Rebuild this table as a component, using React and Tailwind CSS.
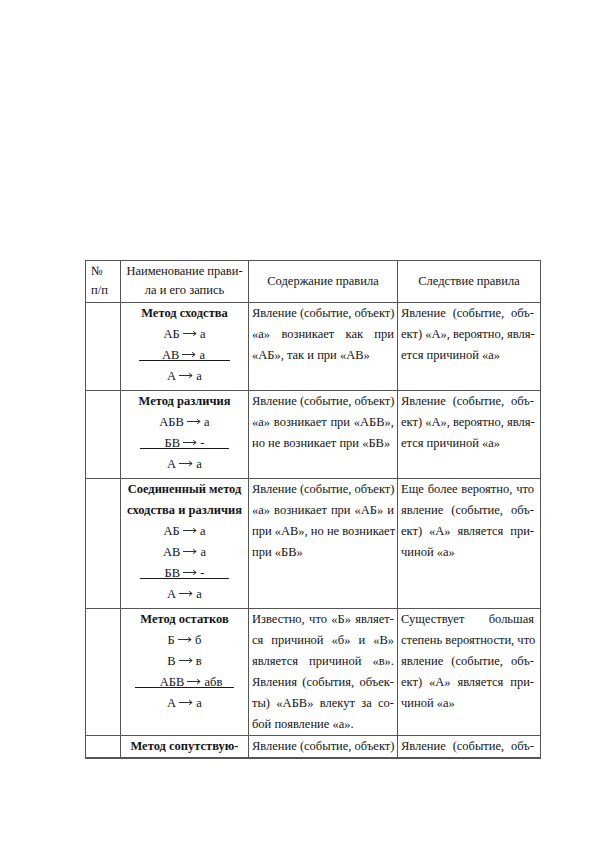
import React from "react";

const Arrow = () => (
  <svg
    viewBox="0 0 14 8"
    className="inline-block w-[14px] h-[8px] align-[1px]"
    fill="none"
    stroke="#1a1a1a"
    strokeWidth="0.9"
  >
    <path d="M0 4.5H12.8" />
    <path d="M10 2.3L13.2 4.5L10 6.7" />
  </svg>
);

const R = ({ a, b }) => (
  <>
    {a} <Arrow /> {b}
  </>
);

const J = ({ children }) => (
  <div className="text-justify [text-align-last:justify] whitespace-nowrap">{children}</div>
);
const L = ({ children }) => <div className="text-left whitespace-nowrap">{children}</div>;
const C = ({ children, b }) => (
  <div className={"text-center whitespace-nowrap" + (b ? " font-bold" : "")}>{children}</div>
);
const U = ({ a, b, cls }) => (
  <div className="text-center whitespace-nowrap">
    <span className={"inline-block border-b border-[#1a1a1a] leading-[10px] " + cls}>
      <R a={a} b={b} />
    </span>
  </div>
);

const td1 = "border border-[#555] p-0 align-top";
const td2 = "border border-[#555] px-[2px] pt-0 align-top";
const td3 = "border border-[#555] pl-[3px] pr-[3px] pt-0 align-top";
const td4 = "border border-[#555] pl-[3px] pr-[6px] pt-0 align-top";

export default function App() {
  return (
    <div className="w-[596px] h-[842px] bg-white pt-[260px] pl-[85px] text-[#141414] font-['Liberation_Serif','Times_New_Roman',serif] text-[12.5px] leading-[21px]">
      <table className="table-fixed border-collapse w-[455px] border-b-2 border-b-[#555]">
        <colgroup>
          <col className="w-[35px]" />
          <col className="w-[128px]" />
          <col className="w-[149px]" />
          <col className="w-[143px]" />
        </colgroup>
        <tbody>
          <tr className="h-[42px]">
            <td className="border border-[#555] pl-[5px] pt-[1px] align-top leading-[19px]">
              <div>№</div>
              <div>п/п</div>
            </td>
            <td className="border border-[#555] pt-[1px] align-top text-center leading-[19px]">
              <div>Наименование прави-</div>
              <div>ла и его запись</div>
            </td>
            <td className="border border-[#555] text-center align-middle">Содержание правила</td>
            <td className="border border-[#555] text-center align-middle">Следствие правила</td>
          </tr>
          <tr className="h-[88px]">
            <td className={td1}></td>
            <td className={td2}>
              <C b>Метод сходства</C>
              <C><R a="АБ" b="а" /></C>
              <U a="АВ" b="а" cls="pl-[23px] pr-[25px]" />
              <C><R a="А" b="а" /></C>
            </td>
            <td className={td3}>
              <J>Явление (событие, объект)</J>
              <J>«а» возникает как при</J>
              <L>«АБ», так и при «АВ»</L>
            </td>
            <td className={td4}>
              <J>Явление (событие, объ-</J>
              <J>ект) «А», вероятно, явля-</J>
              <L>ется причиной «а»</L>
            </td>
          </tr>
          <tr className="h-[88px]">
            <td className={td1}></td>
            <td className={td2}>
              <C b>Метод различия</C>
              <C><R a="АБВ" b="а" /></C>
              <U a="БВ" b="-" cls="pl-[25px] pr-[25px]" />
              <C><R a="А" b="а" /></C>
            </td>
            <td className={td3}>
              <J>Явление (событие, объект)</J>
              <J>«а» возникает при «АБВ»,</J>
              <L>но не возникает при «БВ»</L>
            </td>
            <td className={td4}>
              <J>Явление (событие, объ-</J>
              <J>ект) «А», вероятно, явля-</J>
              <L>ется причиной «а»</L>
            </td>
          </tr>
          <tr className="h-[130px]">
            <td className={td1}></td>
            <td className={td2}>
              <C b>Соединенный метод</C>
              <C b>сходства и различия</C>
              <C><R a="АБ" b="а" /></C>
              <C><R a="АВ" b="а" /></C>
              <U a="БВ" b="-" cls="pl-[25px] pr-[25px]" />
              <C><R a="А" b="а" /></C>
            </td>
            <td className={td3}>
              <J>Явление (событие, объект)</J>
              <J>«а» возникает при «АБ» и</J>
              <J>при «АВ», но не возникает</J>
              <L>при «БВ»</L>
            </td>
            <td className={td4}>
              <J>Еще более вероятно, что</J>
              <J>явление (событие, объ-</J>
              <J>ект) «А» является при-</J>
              <L>чиной «а»</L>
            </td>
          </tr>
          <tr className="h-[125px]">
            <td className={td1}></td>
            <td className={td2}>
              <C b>Метод остатков</C>
              <C><R a="Б" b="б" /></C>
              <C><R a="В" b="в" /></C>
              <U a="АБВ" b="абв" cls="pl-[25px] pr-[12px]" />
              <C><R a="А" b="а" /></C>
            </td>
            <td className={td3}>
              <J>Известно, что «Б» являет-</J>
              <J>ся причиной «б» и «В»</J>
              <J>является причиной «в».</J>
              <J>Явления (события, объек-</J>
              <J>ты) «АБВ» влекут за со-</J>
              <L>бой появление «а».</L>
            </td>
            <td className={td4}>
              <J>Существует большая</J>
              <J>степень вероятности, что</J>
              <J>явление (событие, объ-</J>
              <J>ект) «А» является при-</J>
              <L>чиной «а»</L>
            </td>
          </tr>
          <tr className="h-[21px]">
            <td className={td1}></td>
            <td className={td2}>
              <C b>Метод сопутствую-</C>
            </td>
            <td className={td3}>
              <J>Явление (событие, объект)</J>
            </td>
            <td className={td4}>
              <J>Явление (событие, объ-</J>
            </td>
          </tr>
        </tbody>
      </table>
    </div>
  );
}
